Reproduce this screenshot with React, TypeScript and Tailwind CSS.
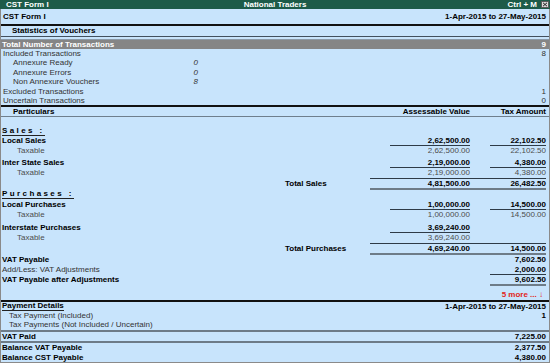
import type { ReactNode } from "react";

// CST Form I report (Tally-style). Rows have fixed pixel heights so the
// value underlines and total lines land where the report draws them.
const LINE = "border-[#2e3b47]";

function CloseBox() {
  return (
    <svg width="8" height="7" viewBox="0 0 8 7" aria-hidden="true">
      <rect x="0.5" y="0.5" width="7" height="6" fill="#d9d9d9" stroke="#5a5a5a" />
      <path d="M2 1.8 L6 5.2 M6 1.8 L2 5.2" stroke="#222" strokeWidth="1" />
    </svg>
  );
}

function StatRow({
  label,
  right,
  italic,
  indent,
}: {
  label: string;
  right?: string;
  italic?: string;
  indent?: boolean;
}) {
  return (
    <div className="flex h-[9.4px] leading-[9.4px] text-[#333]">
      <div className={`w-[197px] flex ${indent ? "pl-[12px]" : "pl-[2px]"}`}>
        <span className="flex-1">{label}</span>
        {italic && <span className="italic">{italic}</span>}
      </div>
      <div className="flex-1 text-right pr-[3px]">{right}</div>
    </div>
  );
}

function SectionHead({ text, h }: { text: string; h: string }) {
  return (
    <div className={`flex items-end ${h} pl-[1px] font-bold`}>
      <span className="tracking-[2.4px] leading-[9px] border-b border-[#222]">{text}</span>
    </div>
  );
}

function ItemRow({ label, av, tax }: { label: string; av?: string; tax?: string }) {
  return (
    <div className="flex h-[10px] leading-[9px] font-bold">
      <div className="w-[284px] pl-[1px]">{label}</div>
      <div className="w-[85px]" />
      <div className="w-[100px] flex justify-end">
        {av && <div className={`w-[80px] h-[10px] text-right border-b ${LINE}`}>{av}</div>}
      </div>
      <div className="w-[76px] flex justify-end">
        {tax && <div className={`w-[56px] h-[10px] text-right border-b ${LINE}`}>{tax}</div>}
      </div>
    </div>
  );
}

function SubRow({ av, tax }: { av?: string; tax?: string }) {
  return (
    <div className="flex h-[10px] leading-[10px] text-[#4d4d4d]">
      <div className="w-[284px] pl-[16px]">Taxable</div>
      <div className="w-[85px]" />
      <div className="w-[100px] text-right">{av}</div>
      <div className="w-[76px] text-right">{tax}</div>
    </div>
  );
}

function TotalRow({ label, av, tax }: { label: string; av: string; tax: string }) {
  return (
    <div className="flex h-[12px] leading-[9px] font-bold">
      <div className="w-[284px]" />
      <div className="w-[85px] pt-[1px]">{label}</div>
      <div className={`w-[176px] flex border-t border-b-2 ${LINE} border-b-[#6e7c88]`}>
        <div className="w-[100px] text-right">{av}</div>
        <div className="flex-1 text-right">{tax}</div>
      </div>
    </div>
  );
}

function TaxRow({
  label,
  value,
  bold,
  h,
  line,
}: {
  label: string;
  value: string;
  bold?: boolean;
  h: string;
  line?: string;
}) {
  return (
    <div className={`flex ${h} leading-[9px] ${bold ? "font-bold" : "text-[#333]"}`}>
      <div className="w-[469px] pl-[1px]">{label}</div>
      <div className="w-[76px] flex justify-end font-bold text-black">
        <div className={`w-[56px] text-right ${line ?? ""}`}>{value}</div>
      </div>
    </div>
  );
}

function BottomRow({ children, value, h }: { children: ReactNode; value: string; h: string }) {
  return (
    <div className={`flex justify-between items-center ${h} pl-[1px] pr-[3px] font-bold`}>
      <span>{children}</span>
      <span>{value}</span>
    </div>
  );
}

export default function App() {
  return (
    <div className="w-[550px] h-[363px] overflow-hidden bg-[#c8e4fc] text-[8px] text-black font-['Liberation_Sans',Arial,sans-serif]">
      <div className="flex items-center h-[9px] leading-[9px] bg-[#1d5b49] text-white font-bold">
        <span className="w-[200px] pl-[6px]">CST Form I</span>
        <span className="flex-1 text-center">National Traders</span>
        <span className="w-[200px] flex justify-end items-center gap-[4px] pr-[1px]">
          Ctrl + M <CloseBox />
        </span>
      </div>

      <div className="h-[354px] border-x border-b border-[#8a8a8a]">
        <div className="flex justify-between items-center h-[15px] pl-[2px] pr-[3px] font-bold">
          <span>CST Form I</span>
          <span>1-Apr-2015 to 27-May-2015</span>
        </div>
        <div className="h-[2px] bg-[#111]" />
        <div className="h-[10px] leading-[10px] pl-[11px] font-bold">Statistics of Vouchers</div>
        <div className="h-[1px] bg-[#42505e]" />
        <div className="h-[2px]" />
        <div className="h-[1px] bg-[#8b99a6]" />
        <div className="flex justify-between h-[9px] leading-[9px] bg-[#858585] text-white font-bold pl-[1px] pr-[3px]">
          <span>Total Number of Transactions</span>
          <span>9</span>
        </div>
        <StatRow label="Included Transactions" right="8" />
        <StatRow label="Annexure Ready" italic="0" indent />
        <StatRow label="Annexure Errors" italic="0" indent />
        <StatRow label="Non Annexure Vouchers" italic="8" indent />
        <StatRow label="Excluded Transactions" right="1" />
        <StatRow label="Uncertain Transactions" right="0" />
        <div className="h-[2px] bg-[#111]" />

        <div className="flex h-[10px] leading-[9px] font-bold border-b border-[#6f7f8d]">
          <div className="w-[284px] pl-[12px]">Particulars</div>
          <div className="w-[85px]" />
          <div className="w-[100px] text-right">Assessable Value</div>
          <div className="w-[76px] text-right">Tax Amount</div>
        </div>
        <div className="h-[9px]" />

        <SectionHead text="Sales :" h="h-[10px]" />
        <ItemRow label="Local Sales" av="2,62,500.00" tax="22,102.50" />
        <SubRow av="2,62,500.00" tax="22,102.50" />
        <div className="h-[2px]" />
        <ItemRow label="Inter State Sales" av="2,19,000.00" tax="4,380.00" />
        <SubRow av="2,19,000.00" tax="4,380.00" />
        <TotalRow label="Total Sales" av="4,81,500.00" tax="26,482.50" />

        <SectionHead text="Purchases :" h="h-[9px]" />
        <div className="h-[1px]" />
        <ItemRow label="Local Purchases" av="1,00,000.00" tax="14,500.00" />
        <SubRow av="1,00,000.00" tax="14,500.00" />
        <div className="h-[3px]" />
        <ItemRow label="Interstate Purchases" av="3,69,240.00" />
        <SubRow av="3,69,240.00" />
        <TotalRow label="Total Purchases" av="4,69,240.00" tax="14,500.00" />

        <TaxRow label="VAT Payable" value="7,602.50" bold h="h-[10px]" />
        <TaxRow
          label="Add/Less: VAT Adjustments"
          value="2,000.00"
          h="h-[10px]"
          line={`h-[10px] border-b ${LINE}`}
        />
        <TaxRow
          label="VAT Payable after Adjustments"
          value="9,602.50"
          bold
          h="h-[11px]"
          line="h-[11px] border-b-2 border-[#6e7c88]"
        />
        <div className="h-[4px]" />
        <div className="h-[10px] leading-[10px] text-right pr-[6px] font-bold text-[#e2231a]">
          5 more ... ↓
        </div>
        <div className="h-[2px] bg-[#111]" />

        <div className="flex justify-between items-end h-[9px] pl-[1px] pr-[3px] font-bold">
          <span className="leading-[8px] border-b border-[#222]">Payment Details</span>
          <span className="leading-[9px]">1-Apr-2015 to 27-May-2015</span>
        </div>
        <div className="flex justify-between h-[9px] leading-[9px] pl-[8px] pr-[3px] text-[#333]">
          <span>Tax Payment (Included)</span>
          <span className="font-bold text-black">1</span>
        </div>
        <div className="h-[9px] leading-[9px] pl-[8px] text-[#333]">
          Tax Payments (Not Included / Uncertain)
        </div>
        <div className="h-[1px]" />
        <div className="h-[2px] bg-[#6d7b88]" />
        <BottomRow value="7,225.00" h="h-[9px]">VAT Paid</BottomRow>
        <div className="h-[2px] bg-[#6d7b88]" />
        <BottomRow value="2,377.50" h="h-[10px]">Balance VAT Payable</BottomRow>
        <BottomRow value="4,380.00" h="h-[9px]">Balance CST Payable</BottomRow>
      </div>
    </div>
  );
}
